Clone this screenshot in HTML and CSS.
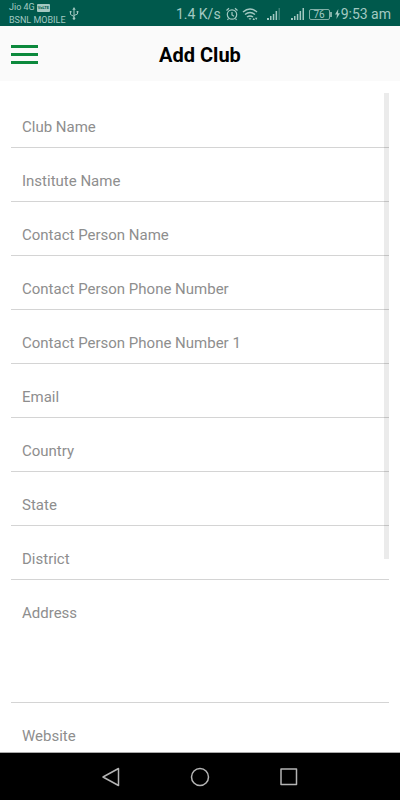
FILE: index.html
```html
<!DOCTYPE html>
<html lang="en">
<head>
<meta charset="utf-8">
<meta name="viewport" content="width=device-width, initial-scale=1">
<title>Add Club</title>
<link rel="stylesheet" href="styles.css">
</head>
<body>
<div class="status">
  <div class="carriers">
    <div class="carrier">Jio 4G <span class="volte">VoLTE</span></div>
    <div class="carrier">BSNL MOBILE</div>
  </div>
  <svg class="usb" width="10" height="14" viewBox="0 0 10 14" fill="none" stroke="currentColor"><path d="M5 2v9M1.500 5v2.500L5 9.500M8.500 5v2L5 8.500"/><path d="M5 0l1.700 2.800H3.300zM.7 4h1.800v1.600H.7zM7.600 4h1.800v1.600H7.600z" fill="currentColor" stroke="none"/><circle cx="5" cy="11.500" r="1.300" fill="currentColor" stroke="none"/></svg>
  <div class="indicators">
    <span class="reading">1.4 K/s</span>
    <svg class="alarm" width="12" height="14" viewBox="0 0 12 14" fill="none" stroke="currentColor" stroke-width="1.200"><circle cx="6" cy="7.500" r="4.700"/><path d="M.5 3.500L3 1.200M11.500 3.500L9 1.200M6 5v3l2 1.200M2.500 11.500l-1 1.500M9.500 11.500l1 1.500"/></svg>
    <svg class="wifi" width="16" height="14" viewBox="0 0 16 14" fill="none" stroke="currentColor" stroke-width="1.500"><path d="M1 5Q8-1 15 5M3 7.500q5-4 10 0M5 10q3-2.200 6 0"/><path d="M6.500 11.200h3L8 13zM10.500 13l1.300-2.300 1.200 2.300zM13 10.700h2.400L14.200 13z" fill="currentColor" stroke="none"/></svg>
    <svg class="signal" width="14" height="12" viewBox="0 0 14 12" fill="currentColor"><path d="M0 10h2v2H0zM3 8h1.500v4H3zM5.800 6h1.500v6H5.800zM8.600 3h1.500v9H8.600z"/><path d="M11.500 0H13v12h-1.500z" opacity=".35"/></svg>
    <svg class="signal second" width="14" height="12" viewBox="0 0 14 12" fill="currentColor"><path d="M0 10h2v2H0zM3 8h1.500v4H3zM5.800 6h1.500v6H5.800zM8.600 3h1.500v9H8.600zM11.500 0H13v12h-1.500z"/></svg>
    <span class="battery">76</span>
    <svg class="bolt" width="5" height="10" viewBox="0 0 5 10" fill="currentColor"><path d="M3.300 0L0 5.500h2L1.400 10 5 4.200H3z"/></svg>
    <span class="reading">9:53 am</span>
  </div>
</div>
<header class="bar">
  <button class="menu" type="button" aria-label="Menu"><span></span><span></span><span></span></button>
  <h1>Add Club</h1>
</header>
<main class="content">
  <form class="form">
    <input class="field" type="text" placeholder="Club Name" aria-label="Club Name">
    <input class="field" type="text" placeholder="Institute Name" aria-label="Institute Name">
    <input class="field" type="text" placeholder="Contact Person Name" aria-label="Contact Person Name">
    <input class="field" type="tel" placeholder="Contact Person Phone Number" aria-label="Contact Person Phone Number">
    <input class="field" type="tel" placeholder="Contact Person Phone Number 1" aria-label="Contact Person Phone Number 1">
    <input class="field" type="email" placeholder="Email" aria-label="Email">
    <input class="field" type="text" placeholder="Country" aria-label="Country">
    <input class="field" type="text" placeholder="State" aria-label="State">
    <input class="field" type="text" placeholder="District" aria-label="District">
    <textarea class="field address" placeholder="Address" aria-label="Address"></textarea>
    <input class="field" type="url" placeholder="Website" aria-label="Website">
  </form>
  <div class="thumb"></div>
</main>
<nav class="nav">
  <button type="button" aria-label="Back"><svg width="20" height="20" viewBox="0 0 20 20"><path d="M17.500 1.500v17L2 10z"/></svg></button>
  <button type="button" aria-label="Home"><svg width="20" height="20" viewBox="0 0 20 20"><circle cx="10" cy="10" r="8.500"/></svg></button>
  <button type="button" aria-label="Recent apps"><svg width="20" height="20" viewBox="0 0 20 20"><path d="M2 2h15.500v15.500H2z"/></svg></button>
</nav>
</body>
</html>
```
FILE: styles.css
```css
* { box-sizing: border-box; }

body {
  margin: 0;
  height: 100vh;
  display: flex;
  flex-direction: column;
  overflow: hidden;
  background: #fff;
  font-family: Roboto, sans-serif;
}

button {
  padding: 0;
  border: 0;
  background: none;
}

svg { display: block; flex: none; }

.status {
  flex: none;
  display: flex;
  align-items: center;
  height: 26px;
  padding: 2px 9px 0;
  background: #00594c;
  color: #a3c9c2;
  white-space: nowrap;
}

.carrier {
  display: flex;
  align-items: center;
  gap: 2px;
  font-size: 9px;
  line-height: 13px;
}

.volte {
  padding: 0 1px;
  border-radius: 1px;
  background: #a3c9c2;
  color: #00594c;
  font-size: 4px;
  font-weight: 700;
  line-height: 8px;
}

.usb { margin-left: 3px; }

.indicators {
  display: flex;
  align-items: center;
  margin-left: auto;
}

.reading {
  font-size: 14px;
  line-height: 20px;
}

.alarm { margin-left: 5px; }
.wifi { margin-left: 4px; }
.signal { margin-left: 9px; }
.second { margin-left: 10px; }

.battery {
  position: relative;
  width: 21px;
  margin-left: 4px;
  border: 1px solid #82b0a8;
  border-radius: 2px;
  font-size: 10px;
  line-height: 9px;
  text-align: center;
}

.battery::after {
  content: "";
  position: absolute;
  top: 2px;
  right: -3px;
  width: 2px;
  height: 5px;
  background: #82b0a8;
}

.bolt { margin: 0 1px 0 5px; }

.bar {
  flex: none;
  display: grid;
  grid-template-columns: 1fr auto 1fr;
  align-items: center;
  height: 55px;
  padding: 2px 11px 0;
  background: #fafafa;
}

.bar h1 {
  margin: 0;
  color: #000;
  font-size: 20px;
  font-weight: 700;
  line-height: 24px;
}

.menu {
  display: flex;
  flex-direction: column;
  gap: 5px;
  width: 27px;
}

.menu span {
  width: 100%;
  height: 3px;
  background: #0c893c;
}

.content {
  position: relative;
  flex: 1;
  min-height: 0;
  padding: 13px 11px 0;
  overflow: hidden;
}

.form {
  display: flex;
  flex-direction: column;
}

.field {
  flex: none;
  width: 100%;
  height: 54px;
  margin: 0;
  padding: 23px 11px 10px;
  border: 0;
  border-bottom: 1px solid #d4d4d4;
  border-radius: 0;
  outline: 0;
  background: none;
  color: #333;
  font: 15px/20px Roboto, sans-serif;
  resize: none;
}

.field::placeholder {
  color: #8e8e8e;
  opacity: 1;
}

.address { height: 123px; }

.thumb {
  position: absolute;
  top: 12px;
  bottom: 193px;
  right: 11px;
  width: 5px;
  background: rgba(0, 0, 0, 0.08);
}

.nav {
  flex: none;
  display: flex;
  align-items: center;
  justify-content: center;
  gap: 69px;
  height: 48px;
  border-top: 1px solid #aaa;
  background: #000;
}

.nav svg {
  fill: none;
  stroke: #b4b4b4;
  stroke-width: 1.5px;
  stroke-linejoin: round;
}
```
